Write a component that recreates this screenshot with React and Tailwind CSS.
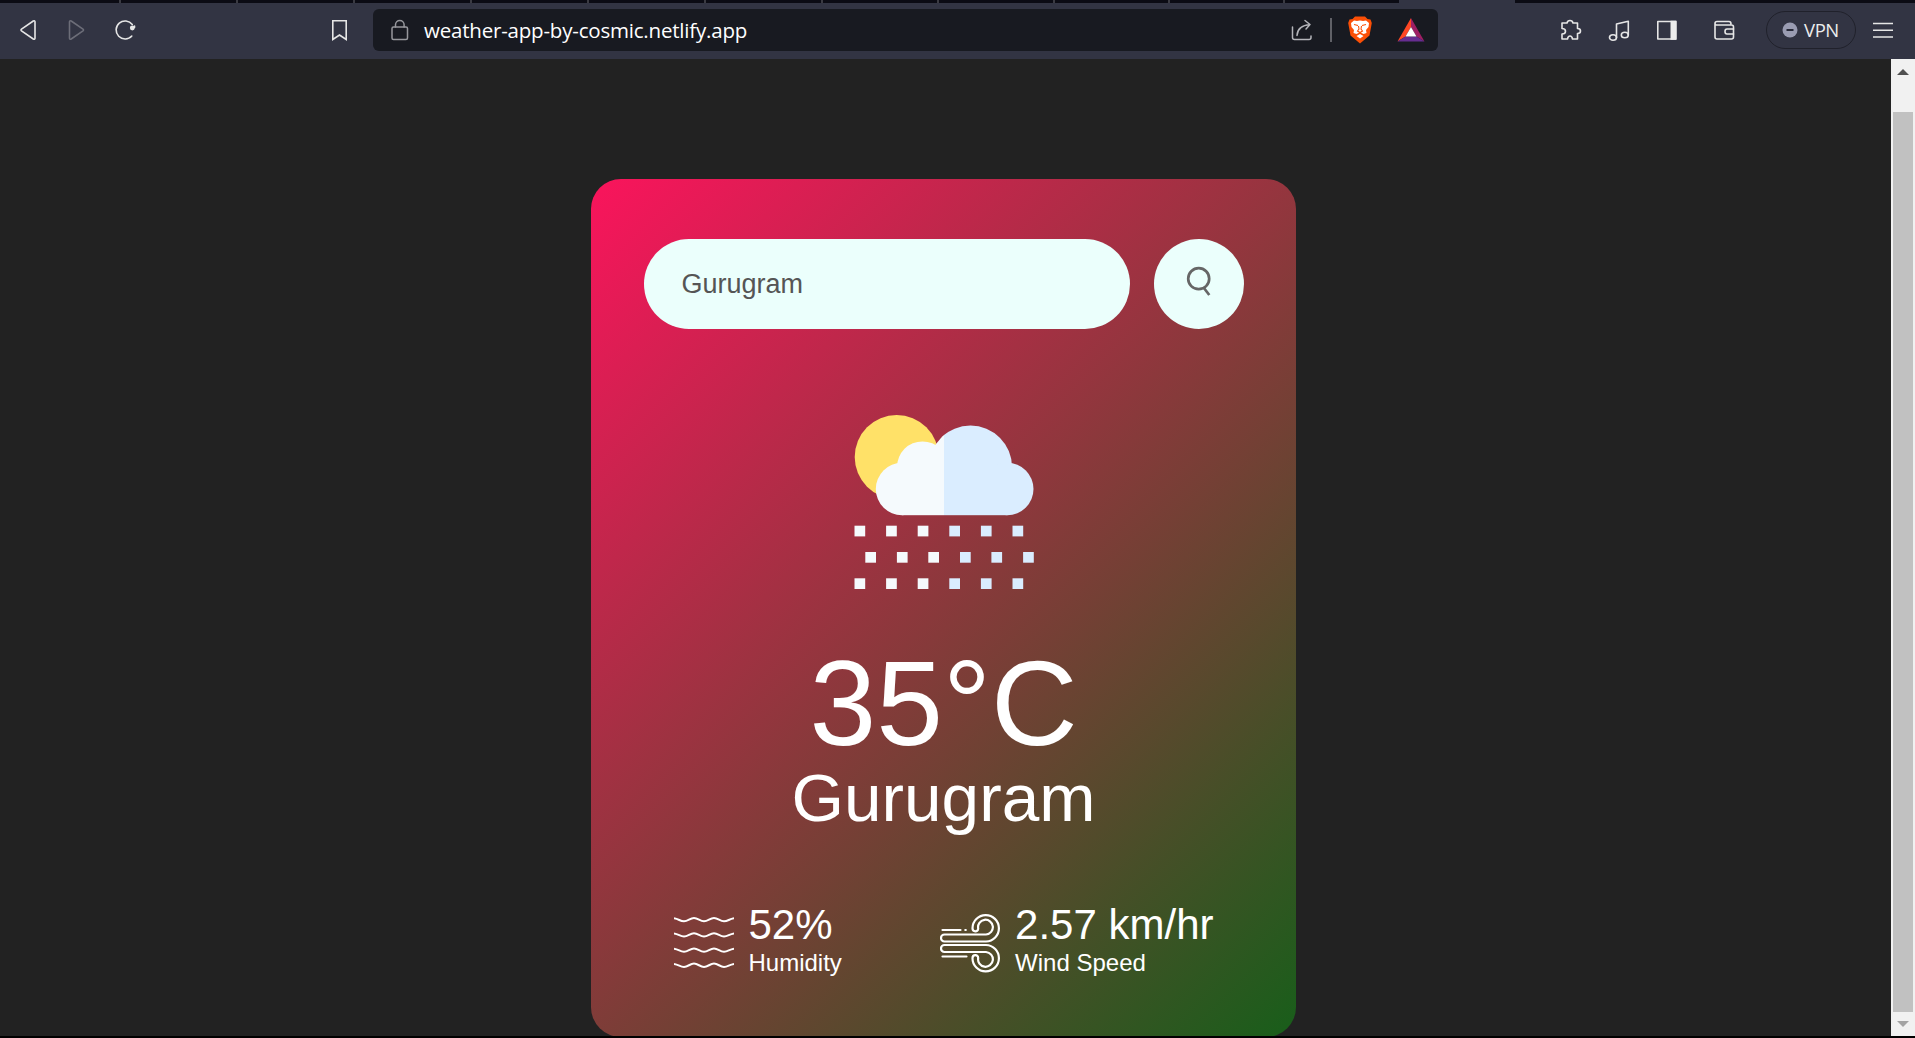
import React from "react";

const TAB_WIDTHS = ["w-[121px]", "w-[117px]", "w-[117px]", "w-[117px]", "w-[117px]", "w-[117px]", "w-[117px]", "w-[116px]", "w-[116px]", "w-[115px]", "w-[115px]"];

function TabStrip() {
  return (
    <div className="flex h-[3px] w-full bg-[#0b0b14]">
      {TAB_WIDTHS.map((w, i) => (
        <div key={i} className={`${w} shrink-0 border-r-2 border-[#3a3a42]`} />
      ))}
      <div className="w-[114px] shrink-0" />
      <div className="w-[116px] shrink-0 bg-[#323443]" />
    </div>
  );
}

const stroke = { fill: "none", stroke: "#e6e6e6", strokeWidth: 1.6, strokeLinejoin: "round", strokeLinecap: "round" };

function Toolbar() {
  return (
    <div className="flex h-14 w-full items-center bg-[#323443]">
      <svg className="mb-0.5 ml-[18px] h-6 w-6 shrink-0" viewBox="0 0 24 24" {...stroke}>
        <path d="M15.3 3Q17 2.200 17 4V20Q17 21.800 15.300 21L3.500 12.800Q2.500 12 3.500 11.200Z" />
      </svg>
      <svg className="mb-0.5 ml-6 h-6 w-6 shrink-0" viewBox="0 0 24 24" {...stroke} stroke="#6c6d78">
        <path d="M5.200 3Q3.500 2.200 3.500 4V20Q3.500 21.800 5.200 21L17 12.800Q18 12 17 11.200Z" />
      </svg>
      <svg className="mb-0.5 ml-6 h-6 w-6 shrink-0" viewBox="0 0 24 24" {...stroke}>
        <path d="M17.800 18A9 9 0 1 1 18.300 6.500" />
        <circle cx="18.300" cy="10" r="2.400" fill="#e6e6e6" stroke="none" />
        <path d="M17 9.500H20.500V8" />
      </svg>
      <svg className="mb-0.5 ml-[190px] h-6 w-6 shrink-0" viewBox="0 0 24 24" {...stroke} strokeLinejoin="miter">
        <path d="M4.800 2.800H18.200V21.500L11.500 17L4.800 21.500Z" />
      </svg>

      <div className="mb-0.5 ml-[21px] flex h-[42px] w-[1065px] shrink-0 items-center rounded-md bg-[#181a21]">
        <svg className="ml-[15px] h-6 w-6 shrink-0" viewBox="0 0 24 24" {...stroke} stroke="#96979c" strokeWidth="1.500">
          <rect x="4" y="9" width="15.500" height="12.500" rx="1.500" />
          <path d="M7.500 9V6.800A4.300 4.300 0 0 1 16.100 6.800V9" />
        </svg>
        <span className="ml-3 w-[330px] shrink-0 whitespace-nowrap font-['Open_Sans','Noto_Sans',sans-serif] text-[20.5px] leading-6 tracking-[-0.2px] text-white">
          weather-app-by-cosmic.netlify.app
        </span>
        <svg className="ml-auto h-6 w-6 shrink-0" viewBox="0 0 24 24" {...stroke} stroke="#b4b5ba" strokeWidth="1.500">
          <path d="M2.500 9V19.500Q2.500 21.500 4.500 21.500H19Q21 21.500 21 19.500V18" />
          <path d="M7 17.500Q7.500 7.500 20 6.500M15 2.500L20 6.500L16 11" />
        </svg>
        <div className="ml-4 h-6 w-0.5 shrink-0 bg-[#606167]" />
        <svg className="ml-4 h-7 w-6 shrink-0" viewBox="0 0 24 28">
          <path fill="#fb4f06" d="M7 0.500H17L19.500 3L22.500 3.500L23.800 7L21.500 19.500L12 27.500L2.500 19.500L0.200 7L1.500 3.500L4.500 3Z" />
          <path fill="#fff" d="M3 7L6 4.500L9 5L12 4.500L15 5L18 4.500L21 7L20.500 11L18 14L18.500 17L15.500 18L13.500 17L12 16L10.500 17L8.500 18L5.500 17L6 14L3.500 11Z" />
          <path fill="#fff" d="M8.500 20L12 18L15.500 20L12 22.500Z" />
          <path stroke="#fb4f06" strokeWidth="1.100" fill="none" d="M6 8.500L10 9.500M18 8.500L14 9.500M10.500 10L11 13L9.500 15L12 16.500L14.500 15L13 13L13.500 10" />
        </svg>
        <svg className="ml-[25px] mr-[13px] h-6 w-7 shrink-0" viewBox="0 0 28 24">
          <path fill="#ff4724" d="M14 0V9L8.500 18.500L0.500 23.500Z" />
          <path fill="#9e1f63" d="M14 0V9L19.500 18.500L27.500 23.500Z" />
          <path fill="#662d91" d="M0.500 23.500L8.500 18.500H19.500L27.500 23.500Z" />
          <path fill="#fff" d="M14 9L19.500 18.500H8.500Z" />
        </svg>
      </div>

      <svg className="mb-0.5 ml-[121px] h-6 w-6 shrink-0" viewBox="0 0 24 24" {...stroke}>
        <path d="M3 5H8Q8.500 2.500 11 2.500T14 5H18.500V10.500Q21.500 10.500 21.500 13T18.500 15.500V21H13.500Q13 18 11 18T8.500 21H3V16Q6.500 16 6.500 13.300T3 10.500Z" />
      </svg>
      <svg className="mb-0.5 ml-6 h-6 w-6 shrink-0" viewBox="0 0 24 24" {...stroke}>
        <path d="M9.500 19.500V6L21.300 3.200V17" />
        <ellipse cx="6" cy="19.500" rx="3.500" ry="2.800" />
        <ellipse cx="17.800" cy="17" rx="3.500" ry="2.800" />
      </svg>
      <svg className="mb-0.5 ml-6 h-6 w-6 shrink-0" viewBox="0 0 24 24" {...stroke}>
        <rect x="2.800" y="3.500" width="18" height="17.500" />
        <path fill="#ececec" stroke="none" d="M15.500 2.700H21.500V21.800H15.500Z" />
      </svg>
      <svg className="mb-0.5 ml-[33px] h-6 w-6 shrink-0" viewBox="0 0 24 24" {...stroke}>
        <path d="M3 5.500V19Q3 21 5 21H19.500Q21.500 21 21.500 19V9Q21.500 7 19.500 7H4.500Q3 7 3 5.500Q3 3.500 5 3.500H17Q19 3.500 19 6" />
        <path d="M21.500 11H15Q13 11 13 13.500T15 16H21.500" />
      </svg>
      <div className="mb-0.5 ml-[30px] flex h-[38px] w-[90px] shrink-0 items-center rounded-full border border-[#20212b]">
        <svg className="ml-[15px] h-4 w-4 shrink-0" viewBox="0 0 16 16">
          <circle cx="8" cy="8" r="7.500" fill="#9a9cb2" />
          <path d="M4.500 8H11.500" stroke="#272938" strokeWidth="2" />
        </svg>
        <span className="ml-1.5 font-['Open_Sans','Noto_Sans',sans-serif] text-[18.5px] leading-6 tracking-[-0.4px] text-[#ececec]">VPN</span>
      </div>
      <svg className="ml-[17px] h-6 w-5 shrink-0" viewBox="0 0 20 24" stroke="#e6e6e6" strokeWidth="1.600">
        <path d="M0 4.500H20M0 11.200H20M0 18H20" />
      </svg>
    </div>
  );
}

const HAIL = [
  [14.5, 125.7], [46.1, 125.7], [77.7, 125.7], [109.3, 125.7], [140.9, 125.7], [172.5, 125.7],
  [25.3, 152], [56.9, 152], [88.3, 152], [120, 152], [151.4, 152], [183.1, 152],
  [14.5, 178.3], [46.1, 178.3], [77.7, 178.3], [109.3, 178.3], [140.9, 178.3], [172.5, 178.3],
];

function WeatherIcon() {
  return (
    <svg className="h-[200px] w-[210px]" viewBox="0 0 210 200">
      <defs>
        <clipPath id="cloudLeft"><rect x="0" y="0" width="104" height="200" /></clipPath>
        <clipPath id="cloudRight"><rect x="104" y="0" width="106" height="200" /></clipPath>
      </defs>
      <circle cx="56.700" cy="57" r="42" fill="#ffe168" />
      <g clipPath="url(#cloudLeft)" fill="#f5fafd">
        <circle cx="62" cy="89" r="26.200" />
        <circle cx="82.500" cy="66.800" r="25.400" />
        <circle cx="130.500" cy="67" r="41.500" />
        <rect x="62" y="65" width="50" height="50.200" />
        <path d="M96 44.500L104 38V80H90Z" />
      </g>
      <g clipPath="url(#cloudRight)" fill="#daedff">
        <circle cx="130.500" cy="67" r="41.500" />
        <circle cx="167.300" cy="89" r="26.200" />
        <rect x="100" y="67" width="67.300" height="48.200" />
      </g>
      {HAIL.map(([x, y], i) => (
        <rect key={i} x={x} y={y} width="10.700" height="10.700" fill={x < 104 ? "#f5fafd" : "#daedff"} />
      ))}
    </svg>
  );
}

function HumidityIcon() {
  return (
    <svg className="mt-3 mr-[15px] h-[60px] w-[60px]" viewBox="0 0 60 60" fill="none" stroke="#fff" strokeWidth="2">
      {[6.5, 21.7, 36.9, 52.1].map((y) => (
        <path key={y} d={`M0 ${y - 1.2}C5 ${y - 0.5} 6 ${y + 1.8} 10 ${y + 1.8}S16 ${y - 1.5} 20 ${y - 1.5}S26 ${y + 1.8} 30 ${y + 1.8}S36 ${y - 1.5} 40 ${y - 1.5}S46 ${y + 1.8} 50 ${y + 1.8}S55 ${y - 0.5} 60 ${y - 1.2}`} />
      ))}
    </svg>
  );
}

function WindIcon() {
  return (
    <svg className="mt-3 mr-[15px] h-[60px] w-[60px]" viewBox="0 0 60 60" fill="none" stroke="#fff" strokeWidth="2.200" strokeLinecap="round">
      <path d="M2.500 17H20.500M25.300 17H25.800M2.500 43.500H26.500" />
      <path d="M4.500 28.500H46A13.200 13.200 0 1 0 32.500 15.300C32.500 19.300 38.200 19.300 38.200 15.500A7.400 7.400 0 1 1 46 21.500H4.500A3.500 3.500 0 0 0 4.500 28.500Z" />
      <path d="M4.500 32H46A13.200 13.200 0 1 1 32.500 45.200C32.500 41.200 38.200 41.200 38.200 45A7.400 7.400 0 1 0 46 39H4.500A3.500 3.500 0 0 1 4.500 32Z" />
    </svg>
  );
}

function Detail({ icon, value, label }) {
  return (
    <div className="flex">
      {icon}
      <div className="text-left">
        <p className="text-[42px] leading-[48px]">{value}</p>
        <p className="text-[24px] leading-[27px]">{label}</p>
      </div>
    </div>
  );
}

function WeatherCard() {
  return (
    <main className="ml-[591px] mt-[120px] flex h-[858px] w-[705px] shrink-0 flex-col items-center rounded-[30px] bg-[linear-gradient(135deg,#fa145c,#185e1a)] pt-[60px] text-white">
      <div className="flex h-[90px] w-[600px] shrink-0 justify-between">
        <div className="flex w-[486px] items-center rounded-full bg-[#ebfffc] pl-[38px] text-[27px] text-[#555]">Gurugram</div>
        <div className="flex w-[90px] items-center justify-center rounded-full bg-[#ebfffc]">
          <svg className="h-10 w-10" viewBox="0 0 40 40" fill="none" stroke="#666" strokeWidth="2.700">
            <circle cx="19.700" cy="14.700" r="10.500" />
            <path d="M24.500 23.500L30.300 31" />
          </svg>
        </div>
      </div>
      <div className="mt-[71px] h-[200px] w-[207px] shrink-0"><WeatherIcon /></div>
      <h1 className="mt-[43px] h-[120px] shrink-0 text-[120px] leading-[120px]">35°C</h1>
      <h2 className="h-[70px] shrink-0 text-[67.5px] leading-[70px]">Gurugram</h2>
      <div className="mt-[68px] flex w-[540px] shrink-0 justify-between">
        <Detail icon={<HumidityIcon />} value="52%" label="Humidity" />
        <Detail icon={<WindIcon />} value="2.57 km/hr" label="Wind Speed" />
      </div>
    </main>
  );
}

function Scrollbar() {
  return (
    <div className="flex w-6 shrink-0 flex-col items-center bg-[#f1f1f1]">
      <svg className="h-[53px] w-6 shrink-0" viewBox="0 0 24 53"><path fill="#505050" d="M12 10L18 16H6Z" /></svg>
      <div className="h-[900px] w-5 shrink-0 bg-[#c1c1c1]" />
      <svg className="h-6 w-6 shrink-0" viewBox="0 0 24 24"><path fill="#a3a3a3" d="M6 9H18L12 15Z" /></svg>
    </div>
  );
}

export default function App() {
  return (
    <div className="flex h-[1038px] w-[1915px] flex-col overflow-hidden bg-black font-['Liberation_Sans',Arial,sans-serif]">
      <TabStrip />
      <Toolbar />
      <div className="flex h-[977px] shrink-0 overflow-hidden bg-[#222]">
        <div className="flex-1"><WeatherCard /></div>
        <Scrollbar />
      </div>
    </div>
  );
}
